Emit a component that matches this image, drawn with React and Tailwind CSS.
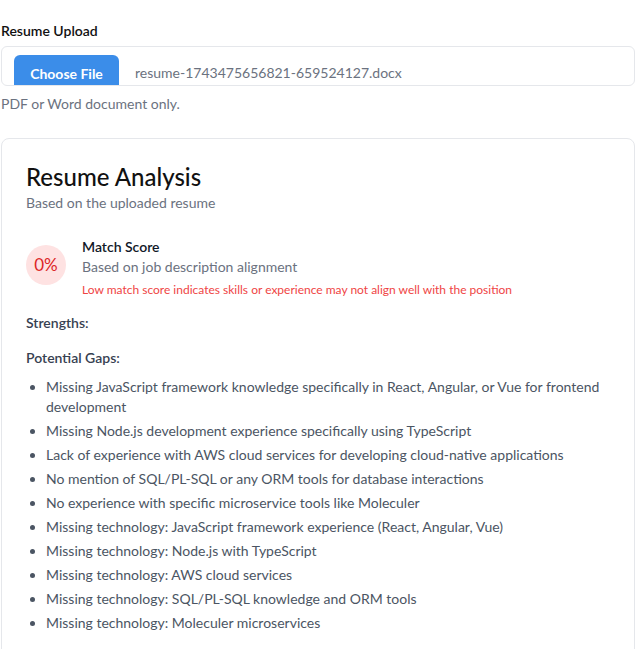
import React from "react";

const gaps = [
    "Missing JavaScript framework knowledge specifically in React, Angular, or Vue for frontend development",
    "Missing Node.js development experience specifically using TypeScript",
    "Lack of experience with AWS cloud services for developing cloud-native applications",
    "No mention of SQL/PL-SQL or any ORM tools for database interactions",
    "No experience with specific microservice tools like Moleculer",
    "Missing technology: JavaScript framework experience (React, Angular, Vue)",
    "Missing technology: Node.js with TypeScript",
    "Missing technology: AWS cloud services",
    "Missing technology: SQL/PL-SQL knowledge and ORM tools",
    "Missing technology: Moleculer microservices",
];

const App = () => {
    return (
        <div
            className="min-h-screen bg-white text-[#111827] overflow-hidden"
            style={{ fontFamily: '"Segoe UI", Lato, "Noto Sans", sans-serif' }}
        >
            <div className="pl-[1px] pr-[6px] pt-[21px]">

                {/* Upload */}
                <label className="block text-sm font-semibold leading-5 text-[#111]">
                    Resume Upload
                </label>

                <div className="mt-[5px] flex h-[40px] items-start overflow-hidden rounded-md border border-[#e5e7eb] bg-white">
                    <div className="ml-[12px] mt-[8px] flex h-[40px] w-[105px] shrink-0 items-start justify-center rounded-t-md bg-[#3b8de9] pt-[9px] text-sm font-bold text-white">
                        Choose File
                    </div>
                    <span className="ml-[16px] mt-[16px] text-sm leading-5 text-[#6b7280]">
                        resume-1743475656821-659524127.docx
                    </span>
                </div>

                <p className="mt-[8px] text-sm leading-5 text-[#6b7280]">
                    PDF or Word document only.
                </p>

                {/* Analysis card */}
                <div className="mt-[24px] h-[600px] rounded-lg border border-[#e5e7eb] bg-white px-[24px] pt-[22px]">
                    <h2 className="text-2xl font-medium leading-8 text-[#111]">
                        Resume Analysis
                    </h2>
                    <p className="text-sm leading-5 text-[#6b7280]">
                        Based on the uploaded resume
                    </p>

                    <div className="mt-[24px] flex items-start gap-4">
                        <div className="mt-[8px] flex h-[40px] w-[40px] shrink-0 items-center justify-center rounded-full bg-[#fee2e2] text-[17px] text-[#dc2626]">
                            0%
                        </div>
                        <div>
                            <h3 className="text-sm font-semibold leading-5 text-[#111827]">
                                Match Score
                            </h3>
                            <p className="text-sm leading-5 text-[#6b7280]">
                                Based on job description alignment
                            </p>
                            <p className="mt-[5px] text-xs leading-4 text-[#ef4444]">
                                Low match score indicates skills or experience may not align well with the position
                            </p>
                        </div>
                    </div>

                    <h4 className="mt-[15px] text-sm font-semibold leading-5 text-[#374151]">
                        Strengths:
                    </h4>

                    <h4 className="mt-[15px] text-sm font-semibold leading-5 text-[#374151]">
                        Potential Gaps:
                    </h4>

                    <ul className="mt-[9px] list-disc space-y-1 pl-[20px] text-sm leading-5 text-[#4b5563]">
                        {gaps.map((gap) => (
                            <li key={gap}>
                                {gap}
                            </li>
                        ))}
                    </ul>
                </div>

            </div>
        </div>
    );
};

export default App;
